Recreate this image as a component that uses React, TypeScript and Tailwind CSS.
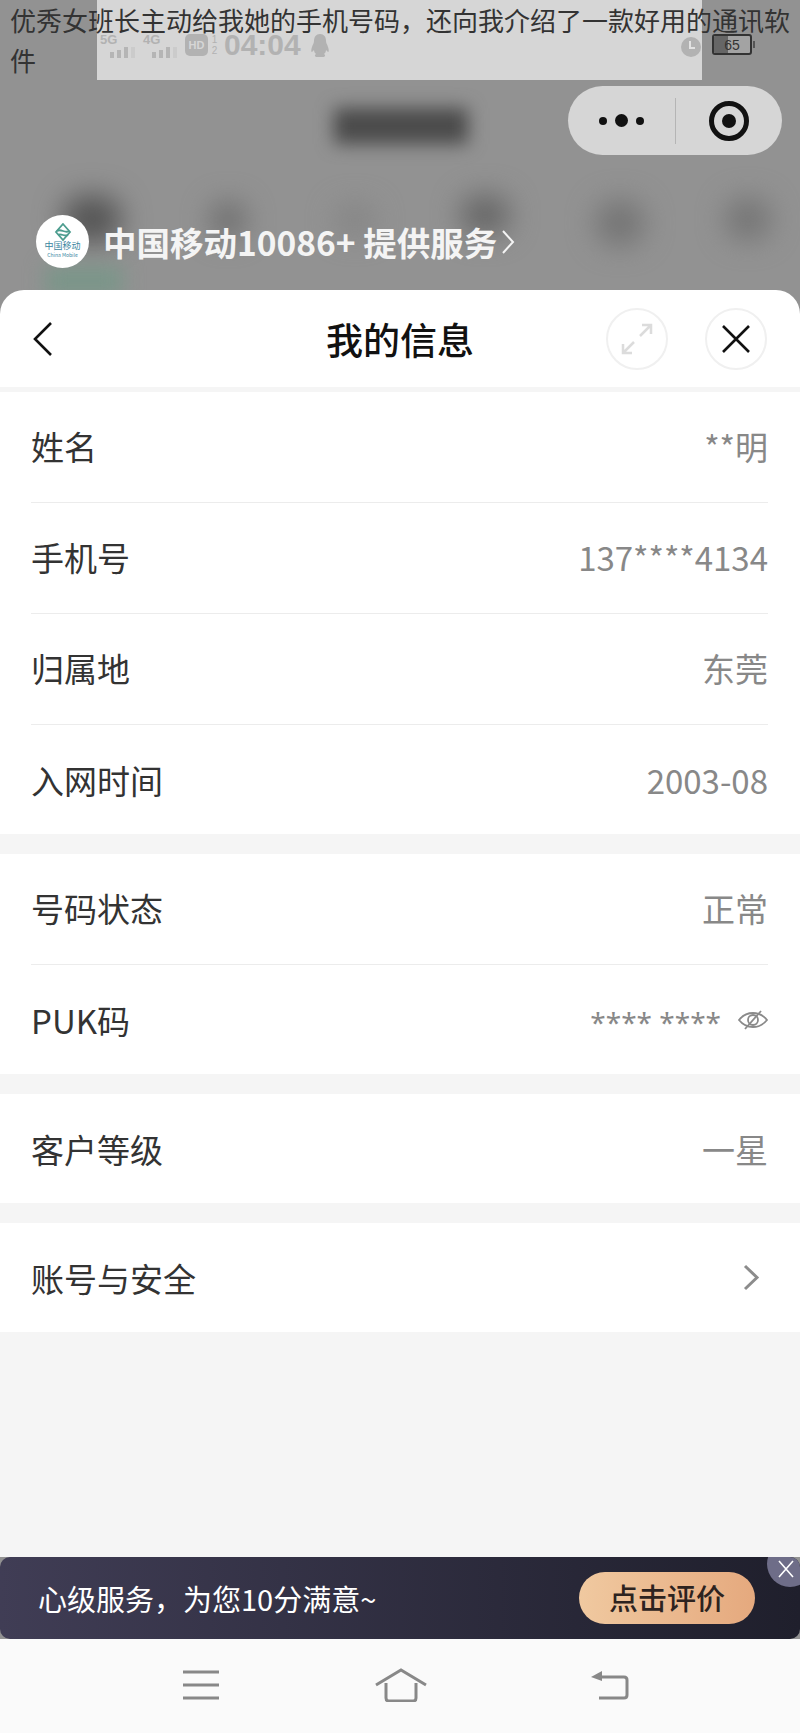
const cards = [
  [
    ["姓名", "**明"],
    ["手机号", "137****4134"],
    ["归属地", "东莞"],
    ["入网时间", "2003-08"],
  ],
  [
    ["号码状态", "正常"],
    ["PUK码", "secret"],
  ],
  [["客户等级", "一星"]],
  [["账号与安全", "arrow"]],
];

function SignalBars() {
  return (
    <div className="flex items-end gap-[3px]">
      <div className="w-[4px] h-[6px] bg-[#b5b5b5]" />
      <div className="w-[4px] h-[8px] bg-[#b5b5b5]" />
      <div className="w-[4px] h-[11px] bg-[#b5b5b5]" />
      <div className="w-[4px] h-[11px] bg-[#cbcbcb]" />
    </div>
  );
}

function StatusBar() {
  return (
    <div className="relative h-[80px] shrink-0 bg-[#929292]">
      <div className="absolute left-[97px] top-0 w-[605px] h-[80px] bg-[#d6d6d6]" />
      <div className="relative flex items-center h-[80px] pl-[100px] pt-[10px] text-[#b2b2b2] font-['Liberation_Sans',sans-serif]">
        <div className="flex flex-col items-start w-[43px]">
          <span className="text-[13px] leading-[13px] font-bold">5G</span>
          <div className="ml-[10px] mt-[1px]">
            <SignalBars />
          </div>
        </div>
        <div className="flex flex-col items-start w-[42px]">
          <span className="text-[13px] leading-[13px] font-bold">4G</span>
          <div className="ml-[9px] mt-[1px]">
            <SignalBars />
          </div>
        </div>
        <div className="flex items-center justify-center w-[23px] h-[22px] rounded-[5px] bg-[#b2b2b2] text-[#d6d6d6] text-[11px] font-bold">
          HD
        </div>
        <div className="flex flex-col items-center w-[9px] ml-[2px] text-[10px] leading-[11px]">
          <span>1</span>
          <span>2</span>
        </div>
        <span className="ml-[5px] w-[77px] text-[30px] leading-[30px] font-bold">04:04</span>
        <svg className="ml-[10px]" width="18" height="23" viewBox="0 0 18 23">
          <path
            d="M9 0c4 0 6 3 6 7 0 2 1 3 2 6 1 3 1 5 0 5l-2-2c0 2-1 3-2 4 2 1 1 3-1 3H6c-2 0-3-2-1-3-1-1-2-2-2-4l-2 2c-1 0-1-2 0-5 1-3 2-4 2-6 0-4 2-7 6-7z"
            fill="#b2b2b2"
          />
        </svg>
        <svg className="absolute left-[680px] top-[34px]" width="22" height="24" viewBox="0 0 22 24">
          <circle cx="11" cy="13" r="10" fill="#b2b2b2" />
          <path d="M10 7v7h5" stroke="#e2e2e2" strokeWidth="2" fill="none" />
        </svg>
        <div className="absolute left-[712px] top-[34px] flex items-center">
          <div className="relative w-[40px] h-[21px] rounded-[3px] border-2 border-[#333] bg-[#a3a3a3] overflow-hidden flex items-center justify-center">
            <div className="absolute left-0 top-0 bottom-0 w-[14px] bg-[#666]" />
            <span className="relative text-[14px] leading-none text-[#333]">65</span>
          </div>
          <div className="w-[2px] h-[7px] ml-[1px] bg-[#555]" />
        </div>
      </div>
    </div>
  );
}

function MiniHeader() {
  return (
    <div className="relative h-[210px] shrink-0 bg-[#929292] overflow-hidden">
      {/* blurred page behind the sheet */}
      <div className="absolute left-[334px] top-[28px] w-[134px] h-[36px] bg-[#4a4a4a] blur-[9px]" />
      <div className="absolute left-[62px] top-[115px] w-[60px] h-[48px] rounded-full bg-[#555] blur-[14px]" />
      <div className="absolute left-[210px] top-[122px] w-[36px] h-[36px] rounded-full bg-[#6c6c6c] blur-[14px]" />
      <div className="absolute left-[335px] top-[125px] w-[40px] h-[30px] rounded-full bg-[#848484] blur-[14px]" />
      <div className="absolute left-[460px] top-[115px] w-[50px] h-[40px] rounded-full bg-[#666] blur-[14px]" />
      <div className="absolute left-[595px] top-[120px] w-[50px] h-[46px] rounded-full bg-[#747474] blur-[14px]" />
      <div className="absolute left-[725px] top-[118px] w-[46px] h-[42px] rounded-full bg-[#747474] blur-[14px]" />
      <div className="absolute left-[45px] top-[186px] w-[78px] h-[30px] bg-[#7a9689] blur-[10px]" />

      <div className="relative flex justify-end pt-[6px] pr-[18px]">
        <div className="flex items-center w-[214px] h-[69px] rounded-full bg-[#d6d6d6]">
          <div className="flex items-center justify-center gap-[8px] w-[107px]">
            <div className="w-[8px] h-[8px] rounded-full bg-[#111]" />
            <div className="w-[13px] h-[13px] rounded-full bg-[#111]" />
            <div className="w-[8px] h-[8px] rounded-full bg-[#111]" />
          </div>
          <div className="w-px h-[46px] bg-[#b5b5b5]" />
          <div className="flex items-center justify-center flex-1">
            <div className="flex items-center justify-center w-[40px] h-[40px] rounded-full border-[5px] border-[#111]">
              <div className="w-[14px] h-[14px] rounded-full bg-[#111]" />
            </div>
          </div>
        </div>
      </div>

      <div className="absolute left-[36px] top-[135px] flex items-center">
        <div className="flex flex-col items-center w-[53px] h-[53px] rounded-full bg-white pt-[8px]">
          <svg width="18" height="18" viewBox="0 0 18 18" fill="none" stroke="#4d9d8f" strokeWidth="1.8">
            <path d="M9 1l7 8-7 8-7-8z" />
            <path d="M3 8c4-3 8 3 12 0M4 12c3-2 7 2 10 0" />
          </svg>
          <span className="text-[9px] leading-[10px] text-[#3a86a0]">中国移动</span>
          <span className="text-[5px] leading-[7px] text-[#3a86a0] whitespace-nowrap">China Mobile</span>
        </div>
        <span className="ml-[14px] text-[33.5px] leading-[40px] font-bold text-[#f4f4f4] whitespace-nowrap">
          中国移动10086+ 提供服务
        </span>
        <svg className="ml-[4px]" width="14" height="26" viewBox="0 0 14 26" fill="none" stroke="#f4f4f4" strokeWidth="2">
          <path d="M2 2l10 11L2 24" />
        </svg>
      </div>
    </div>
  );
}

function SheetHeader() {
  return (
    <div className="flex items-center justify-between h-[97px] shrink-0 bg-white rounded-t-[24px] pl-[33px] pr-[33px]">
      <svg width="20" height="34" viewBox="0 0 20 34" fill="none" stroke="#111" strokeWidth="2.6">
        <path d="M18 1L2 17l16 16" />
      </svg>
      <span className="absolute left-0 right-0 text-center text-[37px] leading-[50px] font-medium text-[#111] pointer-events-none">
        我的信息
      </span>
      <div className="flex items-center gap-[37px]">
        <div className="flex items-center justify-center w-[62px] h-[62px] rounded-full border-2 border-[#f0f0f0]">
          <svg width="32" height="32" viewBox="0 0 32 32" fill="none" stroke="#dcdcdc" strokeWidth="2.5">
            <path d="M19 13l11-11M21 2h9v9M13 19L2 30M2 21v9h9" />
          </svg>
        </div>
        <div className="flex items-center justify-center w-[62px] h-[62px] rounded-full border-2 border-[#f0f0f0]">
          <svg width="28" height="28" viewBox="0 0 28 28" fill="none" stroke="#111" strokeWidth="2.6">
            <path d="M1 1l26 26M27 1L1 27" />
          </svg>
        </div>
      </div>
    </div>
  );
}

function RowValue({ value }: { value: string }) {
  if (value === "arrow") {
    return (
      <svg className="mr-[8px]" width="17" height="27" viewBox="0 0 17 27" fill="none" stroke="#8c8c8c" strokeWidth="3">
        <path d="M2 2l12 11.5L2 25" />
      </svg>
    );
  }
  if (value === "secret") {
    return (
      <div className="flex items-center gap-[17px]">
        <span className="text-[28px] leading-[30px] pt-[4px] text-[#888] font-['Noto_Sans',sans-serif]">**** ****</span>
        <svg width="30" height="20" viewBox="0 0 30 20" fill="none" stroke="#8a8a8a" strokeWidth="1.8">
          <path d="M1 10c4-5 9-7 14-7s10 2 14 7c-4 5-9 7-14 7S5 15 1 10z" />
          <circle cx="15" cy="10" r="5" />
          <path d="M23 1L7 19" />
        </svg>
      </div>
    );
  }
  return <span className="text-[33px] leading-[44px] text-[#888]">{value}</span>;
}

export default function App() {
  return (
    <div className="relative flex flex-col w-[800px] h-[1733px] bg-[#f5f5f5] font-['Noto_Sans_CJK_SC',sans-serif] overflow-hidden">
      {/* caption laid over the screenshot */}
      <p className="absolute z-10 left-0 top-0 w-full px-[10px] text-[26px] leading-[40px] text-[#333]">
        优秀女班长主动给我她的手机号码，还向我介绍了一款好用的通讯软件
      </p>

      <StatusBar />
      <MiniHeader />

      <div className="relative flex flex-col flex-1 min-h-0 bg-[#929292]">
        <SheetHeader />
        <div className="flex flex-col flex-1 bg-[#f5f5f5] pt-[5px] gap-[20px]">
          {cards.map((rows, i) => (
            <div key={i} className="bg-white pl-[31px] pr-[32px]">
              {rows.map(([label, value], j) => (
                <div
                  key={label}
                  className={`flex items-center justify-between ${
                    j < rows.length - 1
                      ? "h-[111px] pb-[2px] border-b border-[#ececec]"
                      : "h-[109px]"
                  }`}
                >
                  <span className="text-[33px] leading-[44px] text-[#333]">{label}</span>
                  <RowValue value={value} />
                </div>
              ))}
            </div>
          ))}
        </div>

        {/* rating banner */}
        <div className="relative flex items-center justify-between h-[82px] shrink-0 rounded-[10px] bg-gradient-to-r from-[#403d55] to-[#1f1f2c] pl-[38px] pr-[45px] overflow-hidden">
          <span className="text-[29px] leading-[40px] text-white">心级服务，为您10分满意~</span>
          <div className="flex items-center justify-center w-[176px] h-[52px] rounded-full bg-gradient-to-r from-[#f0c9a0] to-[#e5a97e] text-[29px] font-medium text-[#2d2320]">
            点击评价
          </div>
          <div className="absolute right-[-13px] top-[-16px] flex items-center justify-center w-[46px] h-[46px] rounded-full bg-[#6e6d88]">
            <svg className="mt-[10px] mr-[8px]" width="16" height="18" viewBox="0 0 16 18" fill="none" stroke="#fff" strokeWidth="1.6">
              <path d="M1 1l14 16M15 1L1 17" />
            </svg>
          </div>
        </div>

        {/* system nav */}
        <div className="flex items-center justify-center h-[94px] shrink-0 bg-[#fafafa] pl-[12px] pb-[2px]">
          <svg width="38" height="30" viewBox="0 0 38 30" fill="none" stroke="#888" strokeWidth="3">
            <path d="M1 2h36M1 15h36M1 28h36" />
          </svg>
          <svg className="ml-[154px]" width="54" height="34" viewBox="0 0 54 34" fill="none" stroke="#888" strokeWidth="3">
            <path d="M2 17L27 2l25 15" />
            <path d="M12 15v15c0 2 1 3 3 3h24c2 0 3-1 3-3V15" />
          </svg>
          <svg className="ml-[162px]" width="40" height="30" viewBox="0 0 40 30" fill="none">
            <path d="M8 7h26c2 0 3 1 3 3v15c0 2-1 3-3 3H9" stroke="#888" strokeWidth="3" />
            <path d="M1 7l11-6v10z" fill="#888" />
          </svg>
        </div>
      </div>
    </div>
  );
}
